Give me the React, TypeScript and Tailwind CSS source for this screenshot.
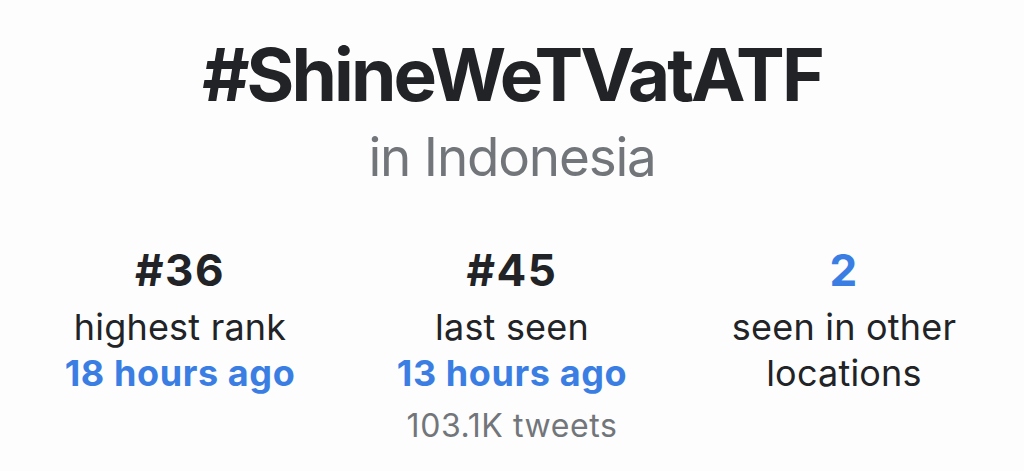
export default function App() {
  const stats = [
    { value: "#36", valueBlue: false, label: ["highest rank"], when: "18 hours ago", extra: "" },
    { value: "#45", valueBlue: false, label: ["last seen"], when: "13 hours ago", extra: "103.1K tweets" },
    { value: "2", valueBlue: true, label: ["seen in other", "locations"], when: "", extra: "" },
  ];

  return (
    <div
      className="w-[1024px] h-[471px] bg-[#fdfdfd] text-[#212326] overflow-hidden flex flex-col items-center"
      style={{ fontFamily: "Inter, 'Noto Sans', sans-serif" }}
    >
      <h1 className="mt-[30px] text-[73px] leading-[90px] font-bold tracking-[-2.9px]">#ShineWeTVatATF</h1>
      <p className="mt-[7px] text-[53px] leading-[60px] tracking-[-1.2px] text-[#72767b]">in Indonesia</p>

      <div className="mt-[53px] w-full px-[14px] grid grid-cols-3">
        {stats.map((s) => (
          <div key={s.value} className="flex flex-col items-center text-center">
            <div
              className={`text-[44px] leading-[60px] font-bold tracking-[1.5px] ${s.valueBlue ? "text-[#3b7ee3]" : ""}`}
            >
              {s.value}
            </div>
            <div className="mt-[4px] flex flex-col items-center">
              {s.label.map((l) => (
                <div key={l} className="text-[36px] leading-[46px] tracking-[0.2px]">
                  {l}
                </div>
              ))}
              {s.when && (
                <div className="text-[36px] leading-[46px] font-bold tracking-[0.6px] text-[#3b7ee3]">{s.when}</div>
              )}
              {s.extra && (
                <div className="mt-[10px] text-[32px] leading-[40px] tracking-[0.6px] text-[#72767b]">{s.extra}</div>
              )}
            </div>
          </div>
        ))}
      </div>
    </div>
  );
}
